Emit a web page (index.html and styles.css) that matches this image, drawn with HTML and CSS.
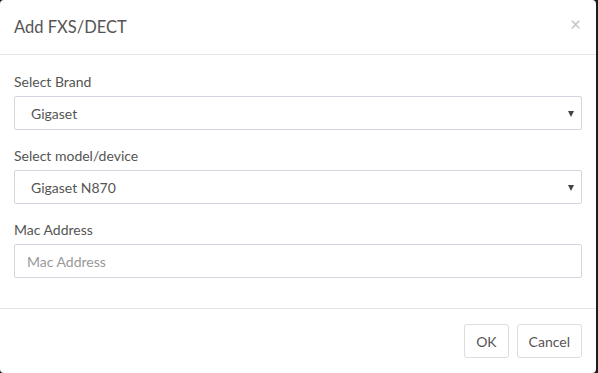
FILE: index.html
```html
<!DOCTYPE html>
<html lang="en">
<head>
    <meta charset="UTF-8">
    <title>Add FXS/DECT</title>
    <link rel="stylesheet" href="styles.css">
</head>
<body>
    <div class="modal">
        <div class="modal-header">
            <h4 class="modal-title">Add FXS/DECT</h4>
            <span class="close">&times;</span>
        </div>
        <div class="modal-body">
            <div class="form-group">
                <label for="brand">Select Brand</label>
                <div class="select-wrap">
                    <select id="brand" class="form-control">
                        <option>Gigaset</option>
                    </select>
                    <span class="caret"></span>
                </div>
            </div>
            <div class="form-group">
                <label for="model">Select model/device</label>
                <div class="select-wrap">
                    <select id="model" class="form-control">
                        <option>Gigaset N870</option>
                    </select>
                    <span class="caret"></span>
                </div>
            </div>
            <div class="form-group">
                <label for="mac">Mac Address</label>
                <input type="text" id="mac" class="form-control input" placeholder="Mac Address">
            </div>
        </div>
        <div class="modal-footer">
            <button type="button" class="btn">OK</button>
            <button type="button" class="btn">Cancel</button>
        </div>
    </div>
</body>
</html>
```

FILE: styles.css
```css
body {
    margin: 0;
    background: #1c1c1c;
    font-family: Lato, "Liberation Sans", sans-serif;
    color: #555;
}
.modal {
    width: 596px;
    height: 373px;
    background: #fff;
    border-radius: 4px;
    display: flex;
    flex-direction: column;
    box-sizing: border-box;
}
.modal-header {
    display: flex;
    align-items: center;
    justify-content: space-between;
    padding: 15px 14px;
    border-bottom: 1px solid #e5e5e5;
}
.modal-title {
    margin: 0;
    font-size: 16.5px;
    font-weight: normal;
    line-height: 24px;
    color: #555;
}
.close {
    font-size: 19px;
    line-height: 18px;
    color: #c4c4c4;
    margin-right: 1px;
    margin-top: -6px;
}
.modal-body {
    padding: 17px 14px 14px;
    flex: 1;
}
.form-group {
    margin-bottom: 16px;
}
.form-group label {
    display: block;
    font-size: 14px;
    line-height: 20px;
    margin-bottom: 4px;
    color: #555;
}
.select-wrap {
    position: relative;
}
.form-control {
    display: block;
    width: 100%;
    height: 34px;
    box-sizing: border-box;
    border: 1px solid #d2d6de;
    border-radius: 2px;
    background: #fff;
    font-family: inherit;
    font-size: 14px;
    color: #555;
    padding: 6px 16px;
    appearance: none;
    -webkit-appearance: none;
    outline: none;
}
.input {
    padding-left: 12px;
}
.input::placeholder {
    color: #999;
}
.caret {
    position: absolute;
    right: 8px;
    top: 15px;
    border-left: 3.5px solid transparent;
    border-right: 3.5px solid transparent;
    border-top: 6px solid #444;
}
.modal-footer {
    display: flex;
    justify-content: flex-end;
    gap: 8px;
    padding: 15px 14px 15px;
    border-top: 1px solid #e5e5e5;
}
.btn {
    height: 34px;
    padding: 0 11px;
    background: #fff;
    border: 1px solid #ddd;
    border-radius: 3px;
    font-family: inherit;
    font-size: 14px;
    color: #555;
}
```
